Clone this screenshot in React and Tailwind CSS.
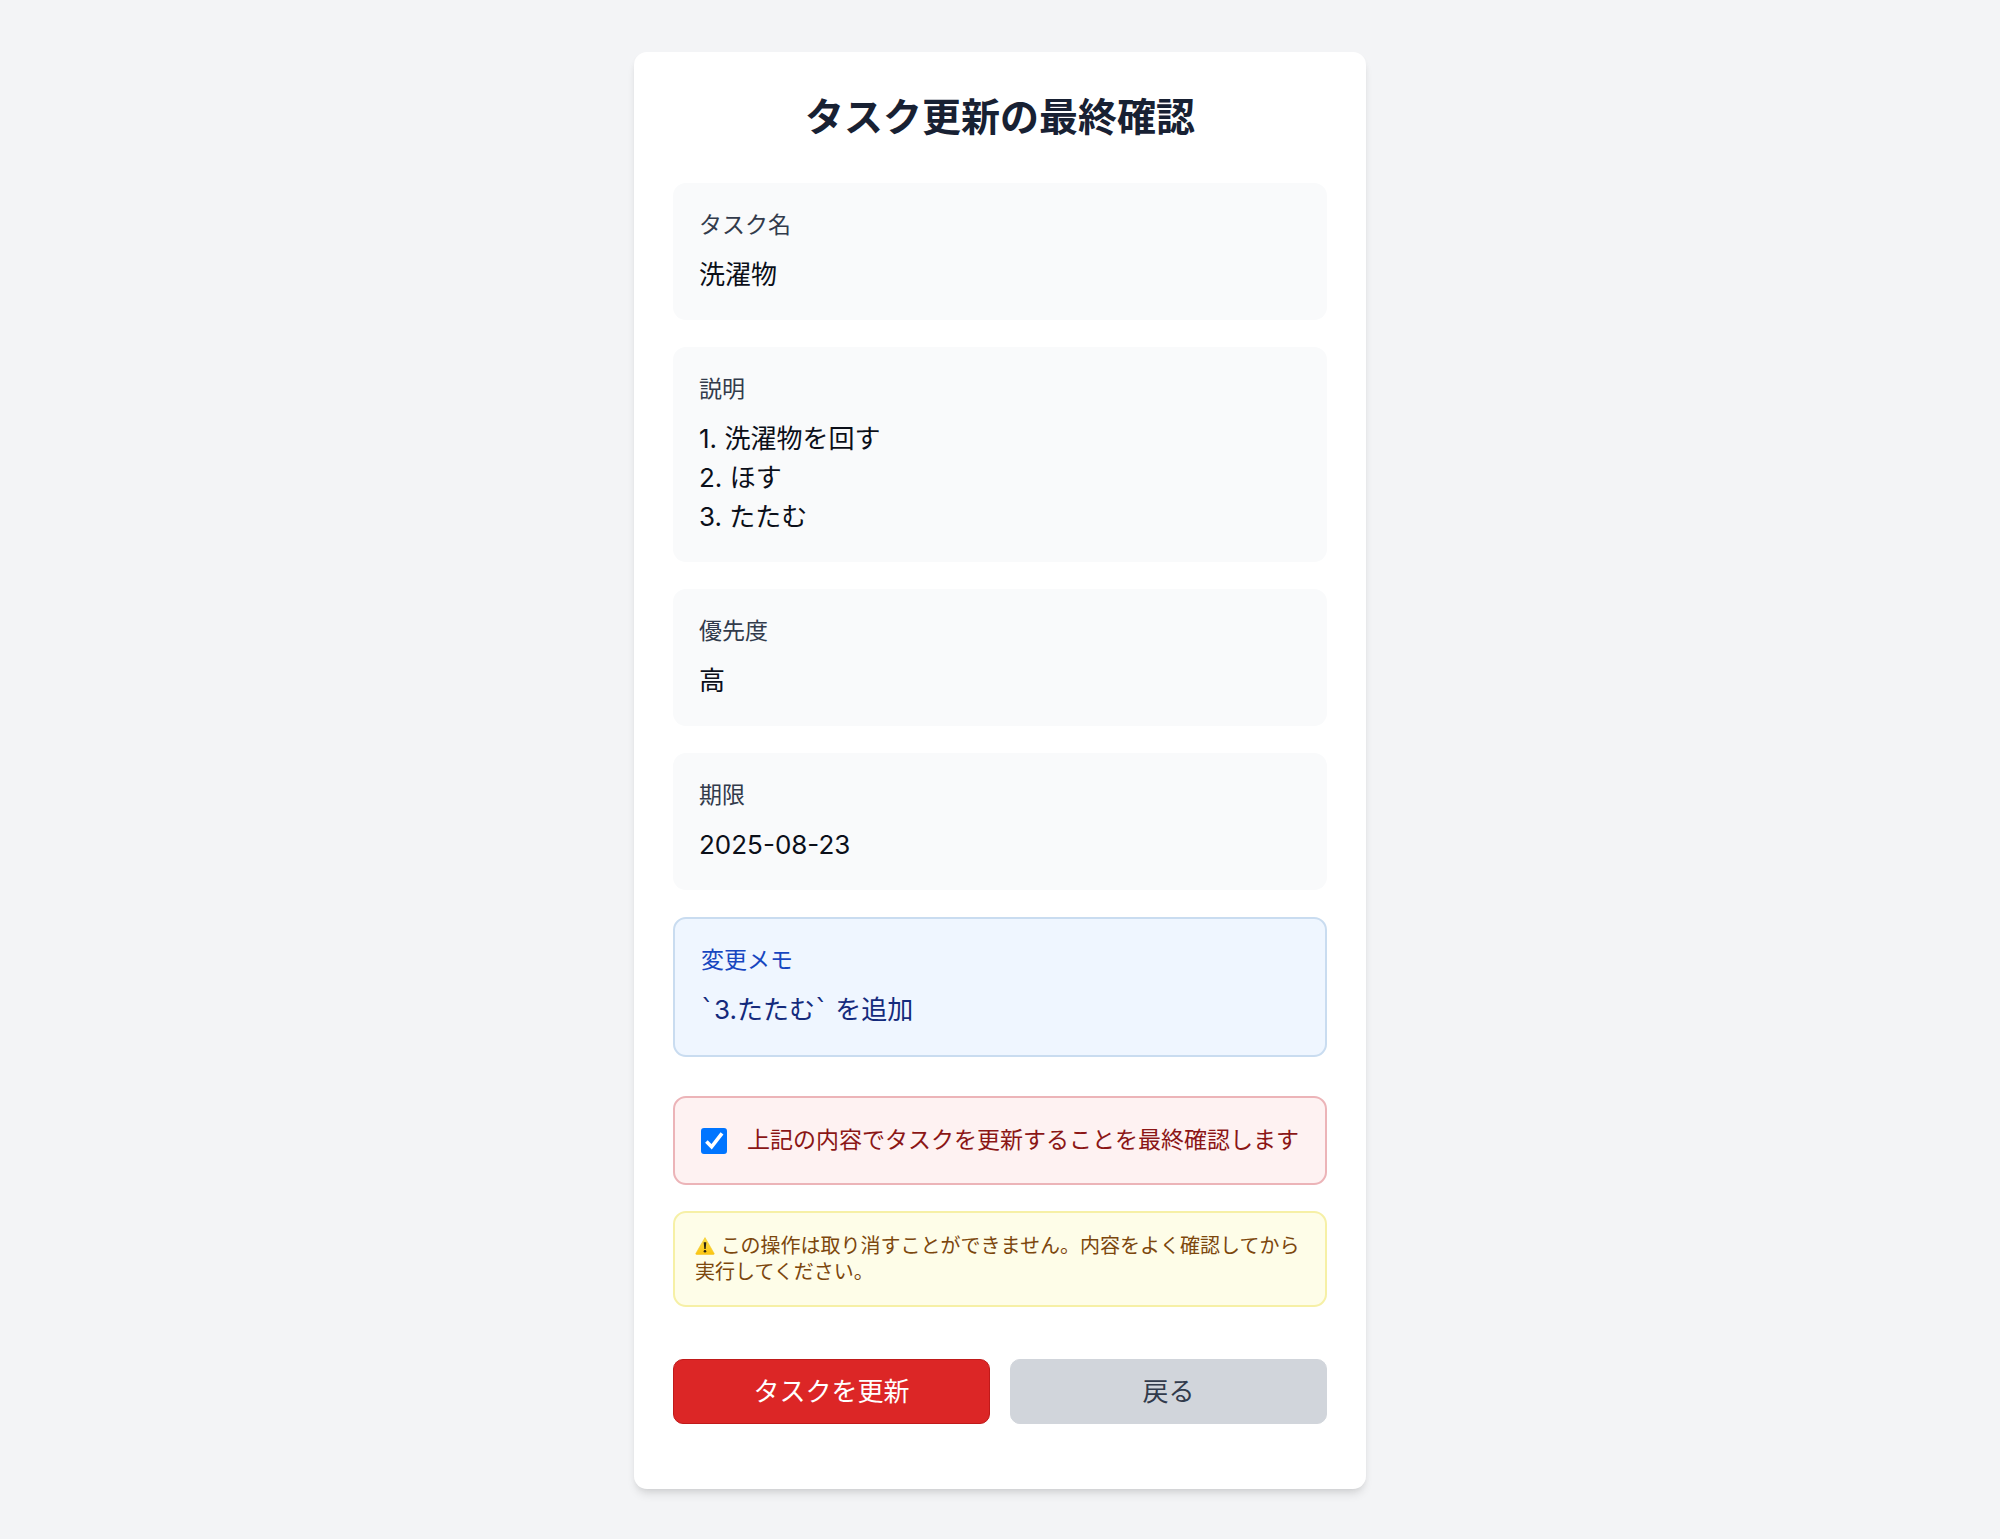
import React, { useState } from "react";

const task = {
  name: "洗濯物",
  description: "1. 洗濯物を回す\n2. ほす\n3. たたむ",
  priority: "高",
  dueDate: "2025-08-23",
  memo: "`3.たたむ` を追加",
};

const Field = ({ label, value }) => {
  return (
    <div className="rounded-[13px] bg-[#f9fafb] p-[26px]">
      <dt className="mb-[13px] text-[23px] leading-[33px] text-[#323b4b]">
        {label}
      </dt>
      <dd className="whitespace-pre-wrap text-[26px] leading-[39px] text-[#0b0f19]">
        {value}
      </dd>
    </div>
  );
};

// Backticks get a wider face so they read as quotes around Japanese text
const MemoText = ({ text }) => {
  return text.split(/(`)/).map((part, i) =>
    part === "`" ? (
      <span key={i} className="font-['DejaVu_Sans',sans-serif]">
        {part}
      </span>
    ) : (
      part
    )
  );
};

const WarningIcon = () => {
  return (
    <svg
      viewBox="0 0 20 20"
      className="inline-block h-5 w-5 align-[-3px]"
      role="img"
      aria-label="警告"
    >
      <defs>
        <linearGradient id="warning-fill" x1="0" y1="0" x2="0" y2="1">
          <stop offset="0" stopColor="#fbe04a" />
          <stop offset="1" stopColor="#fbc412" />
        </linearGradient>
      </defs>
      <path
        d="M10 1.6 19 17.2a.9.9 0 0 1-.8 1.3H1.8a.9.9 0 0 1-.8-1.3Z"
        fill="url(#warning-fill)"
        stroke="#f3c623"
        strokeWidth="0.6"
        strokeLinejoin="round"
      />
      <path d="M8.7 6.2h2.6l-.6 6.8H9.3Z" fill="#2b2410" />
      <circle cx="10" cy="15.3" r="1.3" fill="#2b2410" />
    </svg>
  );
};

const TaskUpdateConfirm = () => {
  const [confirmed, setConfirmed] = useState(true);

  const handleSubmit = (e) => {
    e.preventDefault();
  };

  return (
    <main className="w-full max-w-[732px] rounded-[13px] bg-white px-[39px] pt-[39px] pb-[65px] shadow-[0_7px_10px_-2px_rgba(0,0,0,0.1),0_3px_7px_-3px_rgba(0,0,0,0.1)]">
      <h1 className="mb-[40px] text-center text-[39px] leading-[52px] font-bold text-[#182133]">
        タスク更新の最終確認
      </h1>

      <dl className="flex flex-col gap-[27px]">
        <Field label="タスク名" value={task.name} />
        <Field label="説明" value={task.description} />
        <Field label="優先度" value={task.priority} />
        <Field label="期限" value={task.dueDate} />

        <div className="rounded-[13px] border-2 border-[#c9dcf0] bg-[#eff6ff] px-[26px] py-[25px]">
          <dt className="mb-[13px] text-[23px] leading-[33px] text-[#1746c0]">
            変更メモ
          </dt>
          <dd className="whitespace-pre-wrap text-[26px] leading-[39px] text-[#142a7c]">
            <MemoText text={task.memo} />
          </dd>
        </div>
      </dl>

      <form onSubmit={handleSubmit} className="mt-[39px]">
        <div className="flex items-center gap-[20px] rounded-[13px] border-2 border-[#ecb4b8] bg-[#fef2f2] py-[26px] pr-[20px] pl-[26px]">
          <span className="grid shrink-0">
            <input
              id="confirm"
              type="checkbox"
              checked={confirmed}
              onChange={(e) => setConfirmed(e.target.checked)}
              className="peer col-start-1 row-start-1 h-[26px] w-[26px] appearance-none rounded-[3px] border-2 border-[#767676] bg-white checked:border-[#0075ff] checked:bg-[#0075ff]"
            />
            <svg
              viewBox="0 0 26 26"
              className="pointer-events-none invisible col-start-1 row-start-1 h-[26px] w-[26px] peer-checked:visible"
              fill="none"
              stroke="#ffffff"
              strokeWidth="3.6"
              aria-hidden="true"
            >
              <path d="M5.4 13.6 10.6 18.8 21 5.4" />
            </svg>
          </span>
          <label
            htmlFor="confirm"
            className="text-[23px] leading-[33px] text-[#8b1616]"
          >
            上記の内容でタスクを更新することを最終確認します
          </label>
        </div>

        <div className="mt-[26px] rounded-[13px] border-2 border-[#f6f0a6] bg-[#fefde8] px-[20px] py-[20px]">
          <p className="text-[20px] leading-[26px] text-[#7c470d]">
            <WarningIcon />{" "}
            この操作は取り消すことができません。内容をよく確認してから実行してください。
          </p>
        </div>

        <div className="mt-[52px] flex gap-[20px]">
          <button
            type="submit"
            disabled={!confirmed}
            className="flex-1 rounded-[10px] border border-[#c01a1a] bg-[#dc2626] py-[12px] text-[26px] leading-[39px] text-white hover:bg-[#b91c1c]"
          >
            タスクを更新
          </button>
          <button
            type="button"
            className="flex-1 rounded-[10px] border border-[#d1d5db] bg-[#d1d5db] py-[12px] text-[26px] leading-[39px] text-[#323b4b] hover:bg-[#9ca3af]"
          >
            戻る
          </button>
        </div>
      </form>
    </main>
  );
};

const App = () => {
  return (
    <div
      lang="ja"
      className="flex min-h-screen items-center justify-center bg-[#f3f4f6] py-[52px] font-['Inter','Noto_Sans_CJK_JP',sans-serif]"
    >
      <TaskUpdateConfirm />
    </div>
  );
};

export default App;
